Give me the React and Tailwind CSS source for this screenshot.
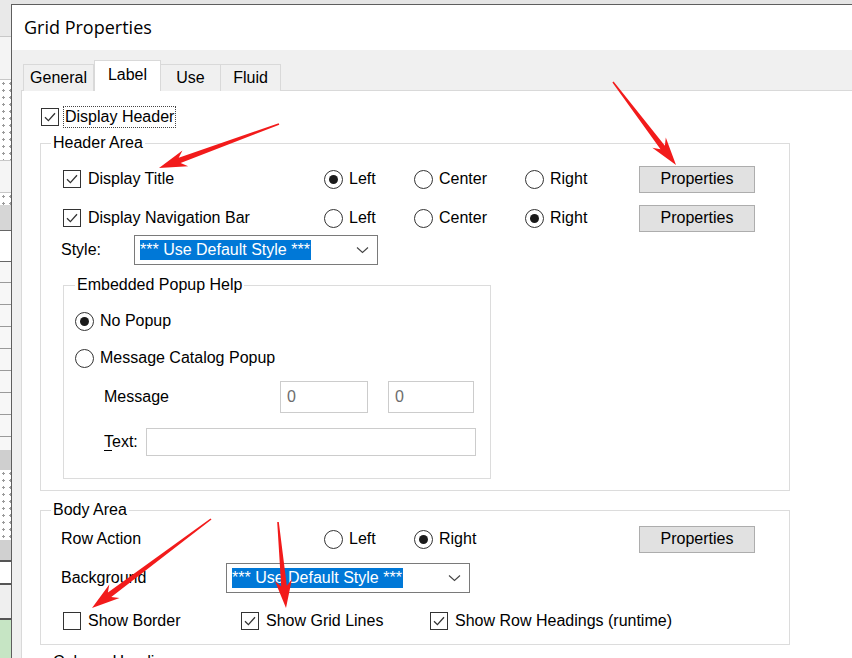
import React from "react";

function Check({ checked }) {
  return (
    <span className="w-[18px] h-[18px] border border-[#333333] bg-white flex items-center justify-center shrink-0">
      {checked && (
        <svg width="14" height="14" viewBox="0 0 14 14">
          <path d="M2 7.2 L5.4 10.6 L12 3.2" fill="none" stroke="#333333" strokeWidth="1.3" />
        </svg>
      )}
    </span>
  );
}

function Radio({ checked }) {
  return (
    <span className="w-[19px] h-[19px] rounded-full border border-[#333333] bg-white flex items-center justify-center shrink-0">
      {checked && <span className="w-[9px] h-[9px] rounded-full bg-[#1a1a1a]" />}
    </span>
  );
}

function RadioLabel({ checked, label, w }) {
  return (
    <div className={`flex items-center gap-[6px] ${w}`}>
      <Radio checked={checked} />
      <span>{label}</span>
    </div>
  );
}

function CheckLabel({ checked, label }) {
  return (
    <div className="flex items-center gap-[7px]">
      <Check checked={checked} />
      <span>{label}</span>
    </div>
  );
}

function Btn() {
  return (
    <div className="w-[116px] h-[27px] bg-[#e1e1e1] border border-[#adadad] flex items-center justify-center shrink-0">
      Properties
    </div>
  );
}

function Select() {
  return (
    <div className="w-[244px] h-[30px] border border-[#7a7a7a] bg-white flex items-center pl-[5px] pr-[8px] shrink-0">
      <span className="bg-[#0078d7] text-white h-[20px] leading-[20px] pr-[1px]">*** Use Default Style ***</span>
      <span className="flex-1" />
      <svg width="13" height="8" viewBox="0 0 13 8">
        <path d="M1 1.5 L6.5 6.5 L12 1.5" fill="none" stroke="#444444" strokeWidth="1.1" />
      </svg>
    </div>
  );
}

function Legend({ children, ml = "ml-[10px]" }) {
  return <legend className={`${ml} px-[2px] leading-[20px]`}>{children}</legend>;
}

function arrowPoints(x1, y1, x2, y2) {
  const dx = x2 - x1;
  const dy = y2 - y1;
  const L = Math.hypot(dx, dy);
  const ux = dx / L;
  const uy = dy / L;
  const nx = -uy;
  const ny = ux;
  const h = 28;
  const hw = 8.5;
  const sw = 2.8;
  const tw = 0.8;
  const bx = x2 - ux * h;
  const by = y2 - uy * h;
  const sx = x2 - ux * (h - 6);
  const sy = y2 - uy * (h - 6);
  const pts = [
    [x1 + nx * tw, y1 + ny * tw],
    [sx + nx * sw, sy + ny * sw],
    [bx + nx * hw, by + ny * hw],
    [x2, y2],
    [bx - nx * hw, by - ny * hw],
    [sx - nx * sw, sy - ny * sw],
    [x1 - nx * tw, y1 - ny * tw],
  ];
  return pts.map((p) => p[0].toFixed(1) + "," + p[1].toFixed(1)).join(" ");
}

function Arrows() {
  const arrows = [
    [279, 124, 159, 168],
    [613, 82, 676, 165],
    [211, 519, 92, 608],
    [278, 522, 286, 608],
  ];
  return (
    <svg className="absolute left-0 top-0 pointer-events-none" width="852" height="658">
      {arrows.map((a, i) => (
        <polygon key={i} points={arrowPoints(...a)} fill="#f21b1b" />
      ))}
    </svg>
  );
}

function LeftStrip() {
  const dots = "bg-[radial-gradient(#9a9a9a_1px,transparent_1.2px)] bg-[length:7px_7px]";
  return (
    <div className="w-[11px] shrink-0 flex flex-col bg-white">
      <div className="h-[37px] bg-[#e9e9e9] border-b border-[#c8c8c8]" />
      <div className="h-[43px] bg-[#f4f4f4] border-b border-[#c8c8c8]" />
      <div className={`h-[80px] ${dots}`} />
      <div className="h-[33px] bg-[#f5f5f5] border-y border-[#c8c8c8]" />
      <div className={`h-[12px] ${dots}`} />
      <div className="h-[25px] bg-[#d6d6d6]" />
      <div className="h-[32px] bg-white border-y border-[#666666]" />
      <div className="h-[188px] bg-[repeating-linear-gradient(to_bottom,#f7f7f7_0px,#f7f7f7_20px,#9a9a9a_20px,#9a9a9a_21px,#f7f7f7_21px,#f7f7f7_22px)]" />
      <div className="h-[20px] bg-[#cfcfcf]" />
      <div className={`h-[70px] ${dots}`} />
      <div className="h-[20px] bg-[#d0d0d0]" />
      <div className="h-[25px] bg-white border-y-2 border-[#555555]" />
      <div className="h-[35px] bg-[#efefef] border-b-2 border-[#555555]" />
      <div className="flex-1 bg-[#c6e5c4]" />
    </div>
  );
}

export default function App() {
  return (
    <div className="relative w-[852px] h-[658px] overflow-hidden flex bg-[#e5e5e5] font-['Liberation_Sans',Arial,sans-serif] text-[16px] text-black">
      <LeftStrip />
      <div className="flex-1 mt-[4px] border-l border-t border-[#5e5e5e] flex flex-col bg-[#f0f0f0] min-w-0">
        <div className="h-[45px] bg-white flex items-center pl-[12px] shrink-0">
          <span className="font-['Open_Sans',sans-serif] text-[18px]">Grid Properties</span>
        </div>
        <div className="flex-1 pt-[10px] pl-[9px] flex flex-col min-h-0">
          <div className="flex items-end h-[31px] pl-[2px] -mb-px relative z-10">
            <div className="w-[71px] h-[27px] border border-[#d9d9d9] border-b-0 bg-[#f0f0f0] flex items-center justify-center">General</div>
            <div className="w-[67px] h-[31px] border border-[#d9d9d9] border-b-0 bg-white flex items-center justify-center pb-[3px]">Label</div>
            <div className="w-[60px] h-[27px] border border-[#d9d9d9] border-b-0 border-l-0 bg-[#f0f0f0] flex items-center justify-center">Use</div>
            <div className="w-[60px] h-[27px] border border-[#d9d9d9] border-b-0 border-l-0 bg-[#f0f0f0] flex items-center justify-center">Fluid</div>
          </div>
          <div className="flex-1 w-[900px] bg-white border border-[#d9d9d9] pl-[18px] pt-[15px]">
            <div className="flex items-center h-[22px] ml-[1px] gap-[4px]">
              <Check checked />
              <span className="h-[22px] border border-dotted border-[#444444] px-[1px] flex items-center">Display Header</span>
            </div>

            <fieldset className="w-[750px] mt-[5px] border border-[#dcdcdc] pb-[11px]">
              <Legend>Header Area</Legend>
              <div className="flex items-center h-[28px] mt-[12px]">
                <div className="w-[283px] pl-[22px]"><CheckLabel checked label="Display Title" /></div>
                <RadioLabel checked label="Left" w="w-[90px]" />
                <RadioLabel label="Center" w="w-[111px]" />
                <RadioLabel label="Right" w="w-[114px]" />
                <Btn />
              </div>
              <div className="flex items-center h-[28px] mt-[11px]">
                <div className="w-[283px] pl-[22px]"><CheckLabel checked label="Display Navigation Bar" /></div>
                <RadioLabel label="Left" w="w-[90px]" />
                <RadioLabel label="Center" w="w-[111px]" />
                <RadioLabel checked label="Right" w="w-[114px]" />
                <Btn />
              </div>
              <div className="flex items-center h-[30px] mt-[3px]">
                <div className="w-[93px] pl-[20px]">Style:</div>
                <Select />
              </div>

              <fieldset className="w-[428px] ml-[22px] mt-[10px] border border-[#dcdcdc] pb-[22px]">
                <Legend ml="ml-[11px]">Embedded Popup Help</Legend>
                <div className="pl-[11px] flex items-center h-[24px] mt-[14px]">
                  <RadioLabel checked label="No Popup" w="" />
                </div>
                <div className="pl-[11px] flex items-center h-[24px] mt-[13px]">
                  <RadioLabel label="Message Catalog Popup" w="" />
                </div>
                <div className="flex items-center h-[32px] mt-[11px]">
                  <div className="w-[216px] pl-[40px]">Message</div>
                  <div className="w-[88px] h-[32px] border border-[#cccccc] text-[#6d6d6d] pl-[6px] pt-[3px]">0</div>
                  <div className="w-[86px] h-[32px] border border-[#cccccc] text-[#6d6d6d] pl-[6px] pt-[3px] ml-[20px]">0</div>
                </div>
                <div className="flex items-center h-[28px] mt-[15px]">
                  <div className="w-[82px] pl-[40px]"><span className="underline underline-offset-[3px]">T</span>ext:</div>
                  <div className="w-[330px] h-[28px] border border-[#cccccc]" />
                </div>
              </fieldset>
            </fieldset>

            <fieldset className="w-[750px] mt-[9px] border border-[#dcdcdc] pb-[11px]">
              <Legend>Body Area</Legend>
              <div className="flex items-center h-[28px] mt-[5px]">
                <div className="w-[283px] pl-[20px]">Row Action</div>
                <RadioLabel label="Left" w="w-[90px]" />
                <RadioLabel checked label="Right" w="w-[225px]" />
                <Btn />
              </div>
              <div className="flex items-center h-[30px] mt-[10px]">
                <div className="w-[185px] pl-[20px]">Background</div>
                <Select />
              </div>
              <div className="flex items-center h-[24px] mt-[16px]">
                <div className="w-[200px] pl-[22px]"><CheckLabel label="Show Border" /></div>
                <div className="w-[189px]"><CheckLabel checked label="Show Grid Lines" /></div>
                <div><CheckLabel checked label="Show Row Headings (runtime)" /></div>
              </div>
            </fieldset>

            <fieldset className="w-[750px] mt-[7px] border border-[#dcdcdc] h-[60px]">
              <Legend>Column Headings</Legend>
            </fieldset>
          </div>
        </div>
      </div>
      <Arrows />
    </div>
  );
}
